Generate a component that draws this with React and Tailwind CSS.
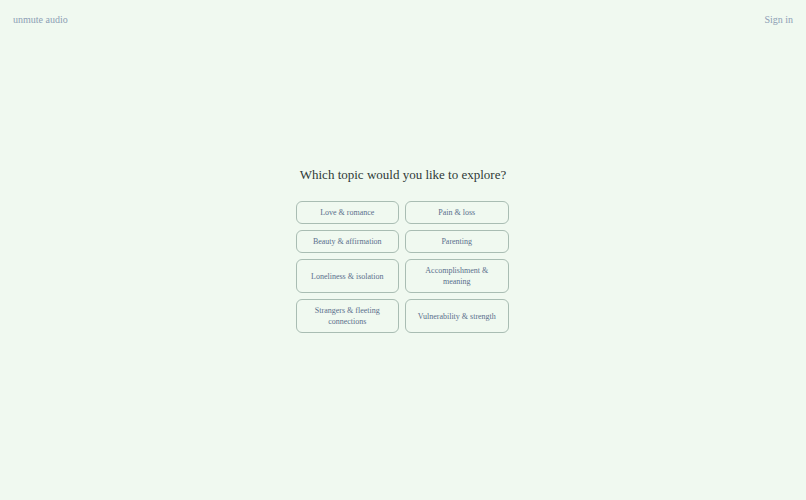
import React from "react";

const topics = [
  "Love & romance",
  "Pain & loss",
  "Beauty & affirmation",
  "Parenting",
  "Loneliness & isolation",
  "Accomplishment & meaning",
  "Strangers & fleeting connections",
  "Vulnerability & strength",
];

export default function App() {
  return (
    <div
      className="h-screen flex flex-col bg-[#f0f9f0]"
      style={{ fontFamily: '"Liberation Serif", "DejaVu Serif", serif' }}
    >
      <header className="h-[38px] flex items-center justify-between px-[13px] text-[10px] text-[#8d9fb5]">
        <span>unmute audio</span>
        <span>Sign in</span>
      </header>
      <main className="flex-1 flex flex-col items-center justify-center pb-[40px]">
        <h1 className="text-[13px] leading-[20px] text-[#2f3a37] mb-[16px]">
          Which topic would you like to explore?
        </h1>
        <div className="grid grid-cols-2 gap-[6px] w-[213px] -translate-x-[1px]">
          {topics.map((t) => (
            <button
              key={t}
              className="px-[10px] py-[5px] rounded-[6px] border border-[#a9bdb3] text-[8px] leading-[11px] text-[#5a6f8c] text-center flex items-center justify-center"
            >
              {t}
            </button>
          ))}
        </div>
      </main>
    </div>
  );
}
